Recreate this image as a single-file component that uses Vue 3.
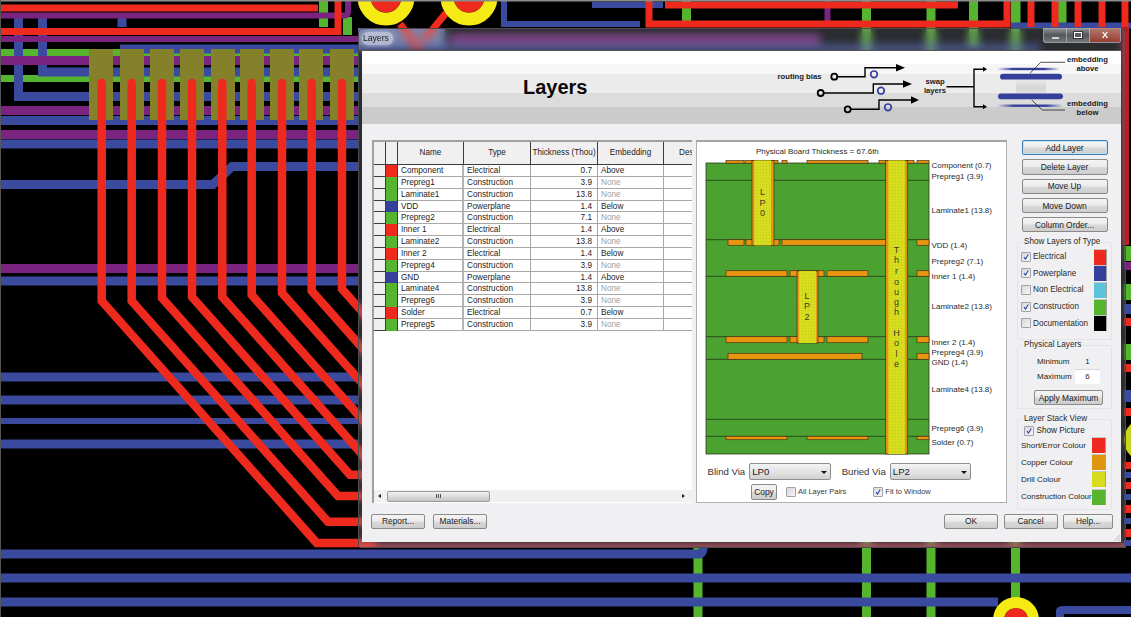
<script setup>
const RED = '#ee2a1e'
const BLUE = '#3a4a9e'
const GREEN = '#55b52f'
const PURPLE = '#7a2480'

// board traces behind the dialog, in page coordinates
const traces = [
  { c: '#6272a4', w: 22, d: 'M358 39H445' },
  { c: GREEN, w: 9, d: 'M323.5 0V27M347.5 17V35M686.5 0V24M866.5 0V617M931 0V617M973.5 0V50M1015.5 0V617M698 548V617M1016 0V24M1062 0V24' },
  { c: GREEN, w: 7, d: 'M0 52.5H358M0 78.5H358' },
  { c: BLUE, w: 9, d: 'M18.5 17V96.5H358M42.5 17V72H358M122 17V27M120 49H358M0 120.5H358M0 144H358M0 184.5H213L232 166.5H358M0 281H358M0 377H358M0 400H358M0 444H358M0 554H698Q703 554 703 548M0 578H1131M0 602H998' },
  { c: BLUE, w: 6, d: 'M0 421H358M504 0V24H640M592 5H663M360 48H1040M1011 25.5H1131' },
  { c: BLUE, w: 8, d: 'M1060 617V611Q1060 610 1064 610H1131' },
  { c: PURPLE, w: 6, d: 'M0 15.5H345Q348 15 348 12V0M0 39H358M827.5 0V27' },
  { c: PURPLE, w: 9, d: 'M0 60.5H358M0 110.5H358M0 134.5H358M0 268.5H358M450 39H820' },
  { c: '#a8303c', w: 5, d: 'M360 545.5H1126' },
  { c: '#b82028', w: 7, d: 'M1125.5 27V245' }
]
const padX = [89, 120, 150, 180, 211, 240, 270, 299, 330]
const redRoutes = [
  { x: 101.7, turn: 301, end: 316.7 },
  { x: 131.7, turn: 301, end: 328 },
  { x: 162, turn: 298, end: 338 },
  { x: 192, turn: 297, end: 350 },
  { x: 222.3, turn: 297, end: 372 },
  { x: 251.7, turn: 295, end: 372 },
  { x: 282, turn: 293, end: 372 },
  { x: 311.7, turn: 291, end: 372 },
  { x: 342, turn: 289, end: 372 }
].map((r) => `M${r.x} 83V${r.turn}L${r.end} ${r.turn + (r.end - r.x) * 1.125}H372`)
const redBars = 'M0 8H318M0 31.5H338V0M649 0V24H1007V0M1031 0V27M1055 0V27M1078 0V27M1102 0V27M1125 0V27M665 5H958M400 24L420 50M446 13L424 40'

const pins = [
  { x: 386, y: -3, r: 22, s: 13, hole: 15.5 },
  { x: 469, y: -3, r: 22, s: 13, hole: 15.5 },
  { x: 1016, y: 620, r: 17.5, s: 11, hole: 12 }
]

// strip of board visible to the right of the window
const rightStrip = [
  [246, 15, GREEN], [262, 8, PURPLE], [284, 16, GREEN], [304, 10, BLUE], [318, 8, RED], [344, 16, GREEN],
  [364, 8, RED], [390, 12, BLUE], [408, 8, RED], [462, 7, RED], [472, 6, BLUE], [482, 7, RED], [494, 6, BLUE],
  [505, 8, RED], [518, 6, BLUE], [529, 8, RED], [540, 6, BLUE]
]

const layers = [
  { name: 'Component', type: 'Electrical', thick: '0.7', embed: 'Above', color: '#ee2a1e' },
  { name: 'Prepreg1', type: 'Construction', thick: '3.9', embed: 'None', color: '#55b52f' },
  { name: 'Laminate1', type: 'Construction', thick: '13.8', embed: 'None', color: '#55b52f' },
  { name: 'VDD', type: 'Powerplane', thick: '1.4', embed: 'Below', color: '#36409c' },
  { name: 'Prepreg2', type: 'Construction', thick: '7.1', embed: 'None', color: '#55b52f' },
  { name: 'Inner 1', type: 'Electrical', thick: '1.4', embed: 'Above', color: '#ee2a1e' },
  { name: 'Laminate2', type: 'Construction', thick: '13.8', embed: 'None', color: '#55b52f' },
  { name: 'Inner 2', type: 'Electrical', thick: '1.4', embed: 'Below', color: '#ee2a1e' },
  { name: 'Prepreg4', type: 'Construction', thick: '3.9', embed: 'None', color: '#55b52f' },
  { name: 'GND', type: 'Powerplane', thick: '1.4', embed: 'Above', color: '#36409c' },
  { name: 'Laminate4', type: 'Construction', thick: '13.8', embed: 'None', color: '#55b52f' },
  { name: 'Prepreg6', type: 'Construction', thick: '3.9', embed: 'None', color: '#55b52f' },
  { name: 'Solder', type: 'Electrical', thick: '0.7', embed: 'Below', color: '#ee2a1e' },
  { name: 'Prepreg5', type: 'Construction', thick: '3.9', embed: 'None', color: '#55b52f' }
]

const stackLines = [180.3, 239.7, 276.3, 336.7, 359.3, 419.3, 436.3]
const padRows = [
  { y: 160.4, h: 2.8, spans: [[726, 744], [745, 778], [782, 787], [807, 868], [879, 914], [917, 929]] },
  { y: 239.7, h: 5.6, spans: [[728, 744], [746, 779], [782, 888], [917, 929]] },
  { y: 270.7, h: 5.6, spans: [[726, 787], [790, 824], [827, 868], [917, 929]] },
  { y: 336.7, h: 6, spans: [[726, 787], [790, 824], [827, 868], [917, 929]] },
  { y: 353.3, h: 6, spans: [[728, 862], [917, 929]] },
  { y: 436.3, h: 3.4, spans: [[726, 787], [807, 868], [917, 929]] }
]
const pads = padRows.flatMap((r) => r.spans.map(([a, b]) => ({ x: a, w: b - a, y: r.y, h: r.h })))
const vias = [
  { x: 752, w: 22, drillX: 754.3, drillW: 16.7, y: 160.4, h: 85 },
  { x: 797, w: 21, drillX: 799, drillW: 17, y: 271, h: 72 },
  { x: 885.7, w: 22, drillX: 888.3, drillW: 16.7, y: 160.4, h: 293.6 }
]
const viaLetters = [
  { x: 762.6, ys: [195, 205.5, 216], text: 'LP0' },
  { x: 806.9, ys: [299, 308.5, 320], text: 'LP2' },
  { x: 896.5, ys: [253, 263, 274, 285, 295, 305, 315], text: 'Through' },
  { x: 896.5, ys: [336, 346, 357, 367], text: 'Hole' }
]
const stackLabels = [
  ['Component (0.7)', 168], ['Prepreg1 (3.9)', 179], ['Laminate1 (13.8)', 213], ['VDD (1.4)', 247.5],
  ['Prepreg2 (7.1)', 264], ['Inner 1 (1.4)', 279], ['Laminate2 (13.8)', 309], ['Inner 2 (1.4)', 345],
  ['Prepreg4 (3.9)', 355], ['GND (1.4)', 365], ['Laminate4 (13.8)', 392], ['Prepreg6 (3.9)', 431], ['Solder (0.7)', 445]
]

const sideButtons = ['Add Layer', 'Delete Layer', 'Move Up', 'Move Down', 'Column Order...']
const layerTypes = [
  { label: 'Electrical', checked: true, color: '#ee2a1e' },
  { label: 'Powerplane', checked: true, color: '#36409c' },
  { label: 'Non Electrical', checked: false, color: '#5bc3dc' },
  { label: 'Construction', checked: true, color: '#55b52f' },
  { label: 'Documentation', checked: false, color: '#000000' }
]
const stackColours = [
  { label: 'Short/Error Colour', color: '#ee2a1e' },
  { label: 'Copper Colour', color: '#e0960c' },
  { label: 'Drill Colour', color: '#d8dc1e' },
  { label: 'Construction Colour', color: '#55b52f' }
]
</script>

<template>
  <div class="desktop">
    <svg class="board" viewBox="0 0 1131 617" width="1131" height="617">
      <rect x="0" y="0" width="1131" height="617" fill="#000" />
      <path v-for="(t, i) in traces" :key="i" :d="t.d" :stroke="t.c" :stroke-width="t.w" fill="none" />
      <rect v-for="x in padX" :key="x" :x="x" y="49" width="24" height="71" fill="#85802a" />
      <path :d="redBars" stroke="#ee2a1e" stroke-width="7" fill="none" />
      <path v-for="r in redRoutes" :key="r" :d="r" stroke="#ee2a1e" stroke-width="8.5" fill="none" stroke-linecap="round" />
      <g v-for="p in pins" :key="p.x">
        <circle :cx="p.x" :cy="p.y" :r="p.r" fill="none" stroke="#f5ea14" :stroke-width="p.s" />
        <circle :cx="p.x" :cy="p.y" :r="p.hole" fill="#ee2a1e" />
      </g>
      <rect v-for="s in rightStrip" :key="s[0]" x="1124" :y="s[0]" width="7" :height="s[1]" :fill="s[2]" />
      <circle cx="1146" cy="440" r="22" fill="#c8d420" />
      <rect x="0" y="0" width="1131" height="1.5" fill="#8c8c8c" />
      <rect x="0" y="0" width="1" height="617" fill="#555" />
    </svg>

    <div class="window">
      <div class="titlebar">
        <span class="title">Layers</span>
        <div class="controls">
          <span class="ctl"><i class="ctl-min"></i></span>
          <span class="ctl"><i class="ctl-max"></i></span>
          <span class="ctl ctl-close">X</span>
        </div>
      </div>

      <div class="client">
        <div class="banner">
          <h1>Layers</h1>
          <svg class="banner-art" viewBox="761 50 360 73" width="360" height="73">
            <defs>
              <linearGradient id="fade">
                <stop offset="0" stop-color="#36409c" stop-opacity="0" />
                <stop offset="0.25" stop-color="#36409c" />
                <stop offset="0.75" stop-color="#36409c" />
                <stop offset="1" stop-color="#36409c" stop-opacity="0" />
              </linearGradient>
              <linearGradient id="mist" x1="0" x2="0" y1="0" y2="1">
                <stop offset="0" stop-color="#aaa" stop-opacity="0" />
                <stop offset="0.5" stop-color="#aaa" stop-opacity="0.35" />
                <stop offset="1" stop-color="#aaa" stop-opacity="0" />
              </linearGradient>
            </defs>
            <g class="art-text">
              <text x="821.5" y="78" text-anchor="end">routing bias</text>
              <text x="935" y="83" text-anchor="middle">swap</text>
              <text x="935" y="92" text-anchor="middle">layers</text>
              <text x="1087.5" y="60.5" text-anchor="middle">embedding</text>
              <text x="1087.5" y="69.5" text-anchor="middle">above</text>
              <text x="1087.5" y="104.5" text-anchor="middle">embedding</text>
              <text x="1087.5" y="113.5" text-anchor="middle">below</text>
            </g>
            <g fill="none" stroke="#000" stroke-width="1.4">
              <path d="M837 75.7H865V66.7H897M824 92H873.3V83H903M851 108.3H879V99H911" />
              <circle cx="834.3" cy="75.7" r="3" stroke-width="1.8" />
              <circle cx="820.7" cy="92" r="3" stroke-width="1.8" />
              <circle cx="847.7" cy="108.3" r="3" stroke-width="1.8" />
              <path d="M946.5 85.7H974M986 68.3H974V105.7H986" />
            </g>
            <g fill="#000">
              <path d="M896 63L905 66.7L896 70.4ZM903 79.3L912 83L903 86.7ZM911 95.3L919 99L911 102.7ZM983 65.8L987 68.3L983 70.8ZM983 103.2L987 105.7L983 108.2Z" />
            </g>
            <g fill="none" stroke="#36409c" stroke-width="1.7">
              <circle cx="874" cy="73.3" r="3.3" />
              <circle cx="881" cy="89.7" r="3.3" />
              <circle cx="888" cy="106.3" r="3.3" />
            </g>
            <rect x="1016" y="78" width="30" height="18" fill="url(#mist)" />
            <rect x="997" y="66.8" width="63" height="2.4" fill="url(#fade)" />
            <rect x="997" y="103.5" width="66" height="2.4" fill="url(#fade)" />
            <rect x="1000" y="72.8" width="62" height="5.8" rx="2.9" fill="#36409c" />
            <rect x="998" y="92.4" width="65" height="5.8" rx="2.9" fill="#36409c" />
            <path d="M1030 72.3L1040.7 61.3H1065M1031.7 99L1042.3 109H1065" fill="none" stroke="#222" stroke-width="0.8" />
          </svg>
        </div>

        <div class="content">
          <div class="grid-box">
            <div class="grid">
              <div class="grid-row head">
                <span class="fix"></span>
                <span class="fix"></span>
                <span>Name</span>
                <span>Type</span>
                <span>Thickness (Thou)</span>
                <span>Embedding</span>
                <span>Description</span>
              </div>
              <div v-for="l in layers" :key="l.name" class="grid-row body-row">
                <span class="fix"></span>
                <span class="swatch-cell" :style="{ background: l.color }"></span>
                <span class="name">{{ l.name }}</span>
                <span>{{ l.type }}</span>
                <span class="num">{{ l.thick }}</span>
                <span :class="{ none: l.embed === 'None' }">{{ l.embed }}</span>
                <span></span>
              </div>
            </div>
            <div class="scrollbar">
              <span class="arrow arrow-left"></span>
              <span class="thumb">
                <i></i><i></i><i></i>
              </span>
              <span class="arrow arrow-right"></span>
            </div>
          </div>

          <div class="stack-panel">
            <svg class="stack" viewBox="697 140 310 320" width="310" height="320">
              <defs>
                <pattern id="drill" width="3" height="3" patternUnits="userSpaceOnUse">
                  <rect width="3" height="3" fill="#d8dc1e" />
                  <rect x="1" y="1" width="0.6" height="0.6" fill="#a4a818" />
                </pattern>
              </defs>
              <text class="stack-title" x="756" y="154">Physical Board Thickness = 67.6th</text>
              <rect x="706" y="163" width="223" height="291" fill="#4ca230" stroke="#2c3a20" stroke-width="0.8" />
              <path v-for="y in stackLines" :key="y" :d="`M706 ${y}H929`" stroke="#24341a" stroke-width="0.8" />
              <rect v-for="(p, i) in pads" :key="i" :x="p.x" :y="p.y" :width="p.w" :height="p.h" fill="#e8950f" stroke="#4a3614" stroke-width="0.7" />
              <g v-for="v in vias" :key="v.x">
                <rect :x="v.x" :y="v.y" :width="v.w" :height="v.h" fill="#e8950f" stroke="#3e2e14" stroke-width="0.7" />
                <rect :x="v.drillX" :y="v.y" :width="v.drillW" :height="v.h" fill="url(#drill)" />
              </g>
              <g v-for="w in viaLetters" :key="w.text">
                <text v-for="(ch, i) in w.text" :key="i" class="via-letter" :x="w.x" :y="w.ys[i]" text-anchor="middle">{{ ch }}</text>
              </g>
              <text v-for="s in stackLabels" :key="s[0]" class="stack-label" x="931.5" :y="s[1]">{{ s[0] }}</text>
            </svg>

            <div class="via-row">
              <label>Blind Via</label>
              <span class="select"><select><option>LP0</option></select></span>
              <label class="buried">Buried Via</label>
              <span class="select"><select><option>LP2</option></select></span>
            </div>
            <div class="copy-row">
              <button class="btn copy">Copy</button>
              <span class="check all-pairs"></span>
              <span class="check-text">All Layer Pairs</span>
              <span class="check fit"><svg viewBox="0 0 10 10"><path d="M2.5 5.2L4.4 7.6L7.8 1.8" /></svg></span>
              <span class="check-text">Fit to Window</span>
            </div>
          </div>

          <div class="side">
            <div class="side-buttons">
              <button v-for="(b, i) in sideButtons" :key="b" class="btn" :class="{ primary: i === 0 }">{{ b }}</button>
            </div>

            <fieldset class="group types">
              <legend>Show Layers of Type</legend>
              <div v-for="t in layerTypes" :key="t.label" class="type-row">
                <span class="check">
                  <svg v-if="t.checked" viewBox="0 0 10 10"><path d="M2.5 5.2L4.4 7.6L7.8 1.8" /></svg>
                </span>
                <span class="type-label">{{ t.label }}</span>
                <span class="swatch" :style="{ background: t.color }"></span>
              </div>
            </fieldset>

            <fieldset class="group physical">
              <legend>Physical Layers</legend>
              <div class="phys-row"><span>Minimum</span><b>1</b></div>
              <div class="phys-row"><span>Maximum</span><b class="phys-input">6</b></div>
              <button class="btn apply">Apply Maximum</button>
            </fieldset>

            <fieldset class="group view">
              <legend>Layer Stack View</legend>
              <div class="show-row">
                <span class="check"><svg viewBox="0 0 10 10"><path d="M2.5 5.2L4.4 7.6L7.8 1.8" /></svg></span>
                <span>Show Picture</span>
              </div>
              <div v-for="c in stackColours" :key="c.label" class="colour-row">
                <span>{{ c.label }}</span>
                <span class="swatch" :style="{ background: c.color }"></span>
              </div>
            </fieldset>
          </div>
        </div>

        <div class="footer">
          <button class="btn foot report">Report...</button>
          <button class="btn foot materials">Materials...</button>
          <span class="spacer"></span>
          <button class="btn foot">OK</button>
          <button class="btn foot">Cancel</button>
          <button class="btn foot help">Help...</button>
        </div>

        <svg class="grip" viewBox="0 0 8 8" width="8" height="8">
          <path d="M7 1L1 7M7 3.5L3.5 7M7 6L6 7" stroke="#a8a8a8" stroke-width="1" stroke-dasharray="1 0.6" fill="none" />
        </svg>
      </div>
    </div>
  </div>
</template>

<style>
html, body {
  margin: 0;
  background: #000;
  overflow: hidden;
}
</style>

<style scoped>
.desktop {
  position: relative;
  width: 1131px;
  height: 617px;
  overflow: hidden;
  font-family: "Liberation Sans", Arial, sans-serif;
  font-size: 8.2px;
  color: #1c1c1c;
}

.board {
  position: absolute;
  left: 0;
  top: 0;
}

/* aero glass frame, the board shows blurred through it */
.window {
  position: absolute;
  left: 357.5px;
  top: 28px;
  width: 768.5px;
  height: 520px;
  box-sizing: border-box;
  padding: 0 4px 5px 3.5px;
  display: flex;
  flex-direction: column;
  background: rgba(190, 200, 215, 0.22);
  backdrop-filter: blur(4px);
  border: 1px solid #4a4a50;
  border-radius: 5px 5px 3px 3px;
}

.titlebar {
  height: 20.5px;
  flex: none;
  display: flex;
  align-items: flex-start;
}

.title {
  margin-top: 3px;
  padding: 1px 4px 1px 1px;
  font-size: 8.6px;
  line-height: 11px;
  color: #1c1c1c;
  background: rgba(235, 235, 240, 0.55);
  border-radius: 6px;
  box-shadow: 0 0 5px rgba(235, 235, 240, 0.6);
}

.controls {
  margin-left: auto;
  margin-top: -1px;
  display: flex;
  height: 14px;
  border: 1px solid rgba(220, 225, 235, 0.6);
  border-top: none;
  border-radius: 0 0 3px 3px;
}

.ctl {
  width: 22px;
  display: flex;
  align-items: center;
  justify-content: center;
  background: linear-gradient(rgba(255, 255, 255, 0.5), rgba(255, 255, 255, 0.2) 50%, rgba(255, 255, 255, 0.35));
  border-right: 1px solid rgba(220, 225, 235, 0.5);
}

.ctl-close {
  width: 30px;
  border-right: none;
  font-size: 9px;
  font-weight: bold;
  color: #fff;
  background: linear-gradient(rgba(235, 160, 140, 0.7), rgba(210, 70, 50, 0.65));
}

.ctl-min {
  width: 7px;
  height: 2px;
  margin-top: 5px;
  background: rgba(255, 255, 255, 0.7);
}

.ctl-max {
  width: 6px;
  height: 4px;
  border: 1px solid #fff;
  outline: 1px solid rgba(0, 0, 0, 0.5);
}

.client {
  position: relative;
  flex: 1;
  display: flex;
  flex-direction: column;
  background: #f0f0f2;
  border-top: 1px solid #555;
}

.banner {
  height: 73px;
  flex: none;
  display: flex;
  align-items: center;
  padding-left: 161px;
  background: linear-gradient(#fff 0 13px, #f6f6f6 13px 23px, #ebebeb 23px 42px, #dcdcdd 42px 56px, #cbcbcb 56px);
}

.banner h1 {
  margin: 0;
  font-size: 20px;
  font-weight: bold;
  color: #0a0a0a;
}

.banner-art {
  margin-left: auto;
  display: block;
}

.art-text text {
  font-size: 7.7px;
  font-weight: bold;
  fill: #1a1a1a;
}

.content {
  height: 363px;
  flex: none;
  display: flex;
  margin-top: 16.5px;
  padding-left: 10px;
}

.grid-box {
  width: 320px;
  flex: none;
  box-sizing: border-box;
  display: flex;
  flex-direction: column;
  border-top: 2px solid #a0a0a0;
  border-left: 2px solid #a0a0a0;
  background: #fff;
}

.grid {
  flex: 1;
  overflow: hidden;
}

.grid-row {
  display: grid;
  grid-template-columns: 12px 12px 66px 67px 67px 66px 72px;
  width: 362px;
}

.grid-row span {
  display: block;
  box-sizing: border-box;
  border-right: 1px solid #a8a8a8;
  border-bottom: 1px solid #a8a8a8;
  padding: 0 3px;
  white-space: nowrap;
  overflow: hidden;
}

.head {
  height: 23px;
  line-height: 22px;
  text-align: center;
  background: #f0f0f0;
  color: #222;
}

.head span {
  padding: 0;
  border-right-color: #3c3c3c;
  border-bottom-color: #3c3c3c;
}

.body-row {
  height: 11.85px;
  line-height: 12px;
}

.body-row .fix {
  background: #f0f0f0;
  border-color: #3c3c3c;
}

.body-row .swatch-cell {
  border-right-color: #3c3c3c;
  border-bottom: none;
}

.body-row .name {
  border-right: 2px solid #b4b4b4;
}

.body-row .num {
  text-align: right;
  padding-right: 5px;
}

.none {
  color: #a0a0a0;
}

.scrollbar {
  height: 12px;
  flex: none;
  margin-bottom: 1px;
  display: flex;
  align-items: center;
  background: #eef0f1;
}

.arrow {
  width: 0;
  height: 0;
  border-top: 2.5px solid transparent;
  border-bottom: 2.5px solid transparent;
}

.arrow-left {
  margin-left: 4px;
  border-right: 3px solid #222;
}

.arrow-right {
  margin-left: 192px;
  border-left: 3px solid #222;
}

.thumb {
  width: 103px;
  height: 11px;
  margin-left: 6px;
  display: flex;
  align-items: center;
  justify-content: center;
  gap: 1px;
  border: 1px solid #9a9a9a;
  box-sizing: border-box;
  border-radius: 2px;
  background: linear-gradient(#f0f0f0, #dcdcdc 50%, #c4c4c4);
}

.thumb i {
  width: 1px;
  height: 4px;
  background: #555;
}

.stack-panel {
  width: 311px;
  flex: none;
  box-sizing: border-box;
  margin-left: 4px;
  background: #fff;
  border: 1px solid #b0b0b0;
  border-top: 2px solid #a4a4a4;
  overflow: hidden;
}

.stack {
  display: block;
  margin-top: -2px;
}

.stack-title,
.stack-label {
  font-size: 8px;
  fill: #2a2a2a;
}

.via-letter {
  font-size: 9px;
  fill: #3a3a20;
}

.via-row {
  display: flex;
  align-items: center;
  height: 18px;
  margin-top: 2.5px;
  padding-left: 10.5px;
  font-size: 9.6px;
  color: #333;
}

.select {
  position: relative;
  display: block;
  width: 81.5px;
  height: 17.5px;
  margin-left: 4px;
}

.select::after {
  content: "";
  position: absolute;
  right: 4px;
  top: 8px;
  border-left: 3px solid transparent;
  border-right: 3px solid transparent;
  border-top: 3px solid #111;
}

.select select {
  appearance: none;
  width: 100%;
  height: 100%;
  box-sizing: border-box;
  margin: 0;
  padding: 0 0 0 2px;
  font: 9.6px "Liberation Sans", Arial, sans-serif;
  color: #222;
  border: 1px solid #8e8e8e;
  border-radius: 2px;
  background: linear-gradient(#f4f4f4, #e4e4e4 50%, #d0d0d0);
}

.buried {
  margin-left: 11px;
}

.copy-row {
  display: flex;
  align-items: center;
  height: 16px;
  margin-top: 3px;
  padding-left: 54px;
  font-size: 7.5px;
}

.copy-row .check {
  margin-right: 2px;
}

.all-pairs {
  margin-left: 9px;
}

.fit {
  margin-left: 27px;
}

.check-text {
  color: #3a3a3a;
}

.btn {
  display: block;
  margin: 0;
  padding: 0;
  box-sizing: border-box;
  font: 8.4px "Liberation Sans", Arial, sans-serif;
  color: #1a1a1a;
  border: 1px solid #8a8a8a;
  border-radius: 2px;
  background: linear-gradient(#f4f4f4, #ebebeb 48%, #dadada 52%, #cdcdcd);
}

.btn.primary {
  border-color: #3d7fb5;
  box-shadow: inset 0 0 0 1px #bfe3f5;
}

.copy {
  width: 26px;
  height: 16px;
}

.side {
  width: 95px;
  flex: none;
  margin-left: 10px;
  font-size: 8px;
}

.side-buttons {
  display: flex;
  flex-direction: column;
  gap: 4px;
  padding-left: 4.5px;
  margin-top: 0;
}

.side-buttons .btn {
  width: 86px;
  height: 15.3px;
}

.group {
  margin: 0;
  padding: 0 3px;
  box-sizing: border-box;
  min-width: 0;
  border: 1px solid #e4e4e6;
  border-radius: 2px;
}

.group legend {
  margin-left: 2px;
  padding: 0 1px;
  font-size: 8.2px;
  line-height: 10px;
  color: #2a2a2a;
}

.types {
  height: 103px;
  margin-top: 5px;
  padding-top: 1px;
}

.type-row {
  display: flex;
  align-items: center;
  height: 16.6px;
}

.type-label {
  margin-left: 2px;
  color: #2a2a2a;
  font-size: 8.2px;
}

.type-row .swatch {
  margin-left: auto;
  width: 13px;
  height: 16px;
  margin-right: 1px;
}

.swatch {
  display: block;
  box-sizing: border-box;
  border-top: 1px solid #c8c8c8;
  border-right: 1px solid #a0a0a0;
}

.check {
  display: block;
  flex: none;
  width: 10px;
  height: 10px;
  box-sizing: border-box;
  border: 1px solid #a2a2a6;
  border-radius: 1px;
  background: linear-gradient(135deg, #d8d8dc, #f6f6f8);
}

.check svg {
  display: block;
  width: 100%;
  height: 100%;
}

.check path {
  fill: none;
  stroke: #2a3fa8;
  stroke-width: 1.3;
}

.physical {
  height: 69px;
  padding-top: 3px;
}

.phys-row {
  display: flex;
  align-items: center;
  height: 15.5px;
  padding-left: 16px;
}

.phys-row span {
  width: 38px;
}

.phys-row b {
  width: 25px;
  font-weight: normal;
  text-align: center;
}

.phys-row .phys-input {
  height: 15px;
  line-height: 15px;
  background: #fff;
  box-shadow: inset 0 1px 0 #d8d8d8;
}

.apply {
  width: 69px;
  height: 15px;
  margin: 6px 0 0 13px;
}

.view {
  height: 96px;
  margin-top: 5px;
}

.show-row {
  display: flex;
  align-items: center;
  gap: 3px;
  height: 11px;
  margin-top: 1px;
  padding-left: 2.5px;
  font-size: 8.2px;
}

.colour-row {
  display: flex;
  align-items: center;
  justify-content: space-between;
  height: 17.2px;
  padding-right: 2px;
  white-space: nowrap;
}

.colour-row .swatch {
  width: 14px;
  height: 16px;
}

.footer {
  display: flex;
  gap: 5.5px;
  margin-top: 10.5px;
  padding: 0 8px 0 9px;
}

.foot {
  width: 54px;
  height: 15.5px;
}

.materials {
  margin-left: 2.5px;
}

.help {
  width: 50px;
}

.spacer {
  flex: 1;
}

.grip {
  position: absolute;
  right: 0;
  bottom: 0;
}
</style>
